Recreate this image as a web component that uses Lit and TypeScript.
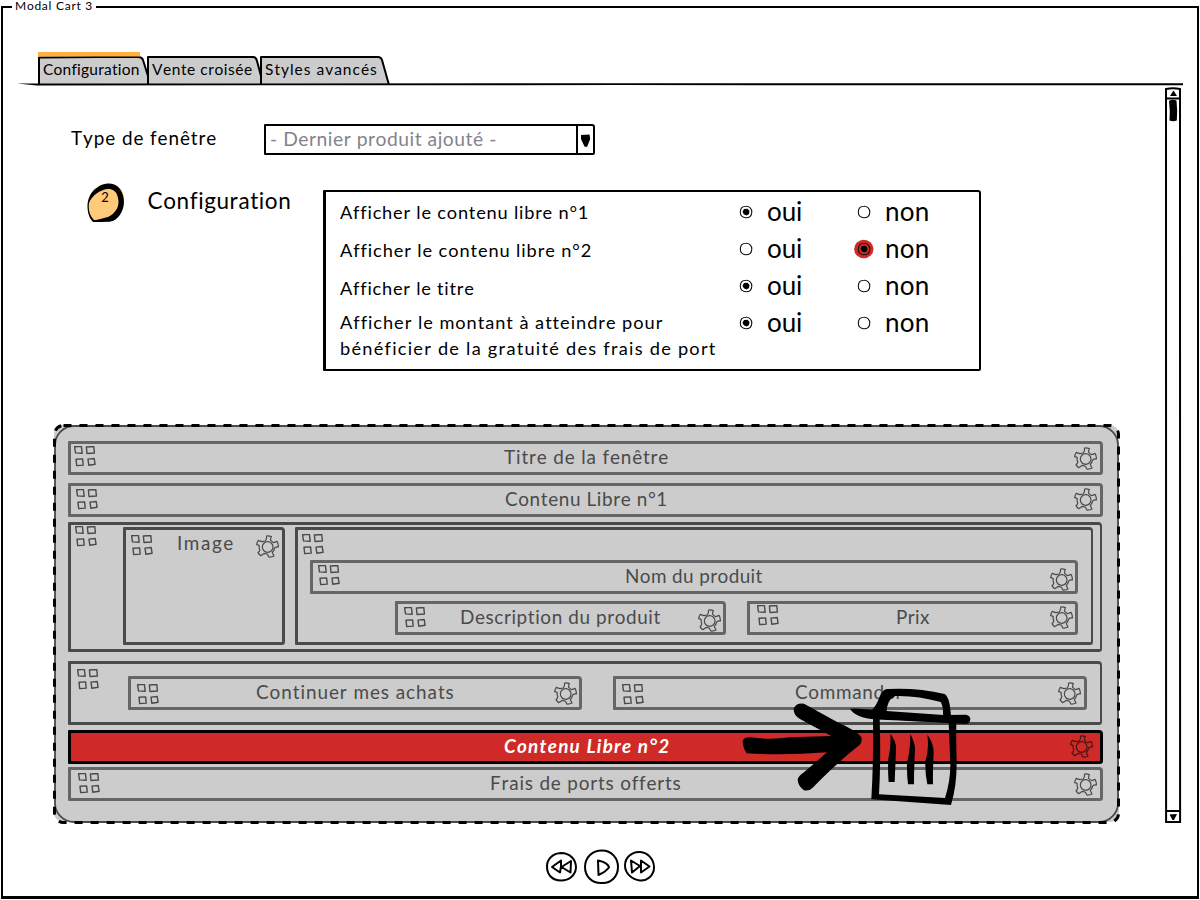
import { LitElement, html, svg, css, nothing } from "lit";
import { customElement, property, query } from "lit/decorators.js";

/** One line of text, tracked so that it fills a given width. */
@customElement("sk-text")
class SkText extends LitElement {
  @property() text = "";
  @property({ type: Number }) w = 0;
  @property({ type: Number }) size = 18.9;
  @query("span") span!: HTMLSpanElement;
  static styles = css`
    :host { display: block; flex: none; height: var(--line, 24px); }
    span { display: block; width: max-content; white-space: pre; line-height: var(--line, 24px); font-kerning: none; font-variant-ligatures: none; }
  `;
  firstUpdated() {
    const natural = this.span.getBoundingClientRect().width;
    const gaps = Math.max(1, this.text.length - 1);
    this.span.style.letterSpacing = (this.w + 0.3 - natural) / gaps + "px";
  }
  render() {
    return html`<span style="font-size:${this.size}px">${this.text}</span>`;
  }
}

const handle = html`<svg width="22" height="21" viewBox="0.2 0.5 22 21" fill="none" stroke="#4a4a4a" stroke-width="1.4" stroke-linejoin="round">
  <path d="M.8 1.2 7.6.9 8.4 7.8 1.7 7.4zM12.6 1.5 20 1 20.6 7.5 13.2 8zM2.2 13.8 8.8 13.4 9.4 19.6 2.9 20.1zM14.2 13.6 20.4 13 21.3 18.8 15 19.7z"/></svg>`;

const gear = html`<svg width="23" height="23" viewBox="0 0 69 69" fill="none" stroke="var(--gear, #4a4a4a)" stroke-width="3.6" stroke-linejoin="round">
  <path d="M32 3Q39 2 46 5Q43 11 44 16L52 23Q58 22 63 19Q68 27 67 36Q61 35 56 39Q54 47 49 52Q51 58 54 63Q47 67 38 66Q37 60 33 57L24 55Q19 60 14 62Q9 58 6 53Q12 49 11 43Q8 38 10 32Q6 29 2 29Q3 21 7 16Q12 19 18 20L28 18Q32 12 32 3Z"/>
  <circle cx="35" cy="36" r="16"/></svg>`;

@customElement("sk-bar")
class SkBar extends LitElement {
  @property() label = "";
  @property({ type: Number }) hx = -1;
  @property({ type: Number }) hy = 5;
  @property({ type: Number }) tx = 0;
  @property({ type: Number }) ty = 4;
  @property({ type: Number }) tw = 0;
  @property({ type: Number }) gx = 0;
  @property({ type: Number }) gy = 6.5;
  static styles = css`
    :host { display: flex; box-sizing: border-box; flex: none; height: 34px; border: 3px solid #666; border-radius: 1px 4px 3px 1px; align-items: flex-start; color: #4a4a4a; }
    :host([tall]) { border-color: #4a4a4a; }
    :host([danger]) { --gear: #4a1512; background: #cf2a27; border-color: #000; color: #fff; font-style: italic; font-weight: 700; }
    svg, sk-text { flex: none; display: block; }
    .cell { flex: none; }
  `;
  render() {
    const hasHandle = this.hx >= 0;
    const after = hasHandle ? this.hx + 22 : 3;
    return html`
      ${hasHandle ? html`<div class="cell" style="margin:${this.hy - 3}px 0 0 ${this.hx - 3}px">${handle}</div>` : nothing}
      <div class="cell" style="width:${this.tw}px;margin:${this.ty - 3}px 0 0 ${this.tx - after}px"><sk-text .text=${this.label} .w=${this.tw}></sk-text></div>
      <div class="cell" style="margin:${this.gy - 3.3}px 0 0 ${this.gx + 0.3 - this.tx - this.tw}px">${gear}</div>`;
  }
}

@customElement("sk-radio")
class SkRadio extends LitElement {
  @property({ type: Boolean }) on = false;
  @property({ type: Boolean }) alert = false;
  static styles = css`:host, svg { display: block; flex: none; }`;
  render() {
    return html`<svg width="20" height="20" viewBox="0 0 20 20">
      ${this.alert ? svg`<ellipse cx="9.8" cy="10" rx="9.7" ry="9.2" fill="#cf2a27"/>` : nothing}
      <path d="M10 4.3C13.4 4.2 15.8 6.6 15.8 10C15.7 13.5 13.3 15.8 10 15.8C6.6 15.7 4.2 13.4 4.3 10C4.4 6.6 6.7 4.3 10 4.3Z" fill="none" stroke="#111" stroke-width="1.1"/>
      ${this.on ? svg`<path d="M8 7.1 11.6 6.7 13.5 9 13 12 10.7 13.4 7.8 12.3 6.5 9.8Z" fill="#000"/>` : nothing}
    </svg>`;
  }
}

const options = [
  { lines: [["Afficher le contenu libre n°1", 248]], yes: true, h: 37, pad: 7 },
  { lines: [["Afficher le contenu libre n°2", 251]], yes: false, h: 37, pad: 8 },
  { lines: [["Afficher le titre", 133.5]], yes: true, h: 37, pad: 9 },
  { lines: [["Afficher le montant à atteindre pour", 322], ["bénéficier de la gratuité des frais de port", 375]], yes: true, h: 60, pad: 6 },
] as { lines: [string, number][]; yes: boolean; h: number; pad: number }[];

@customElement("app-root")
class AppRoot extends LitElement {
  static styles = css`
    :host { display: block; position: relative; width: 1200px; height: 900px; box-sizing: border-box; padding: 6px 1px 1px; background: #fff; color: #000; font-family: Lato, "Open Sans", sans-serif; }
    svg { display: block; flex: none; }
    .frame { box-sizing: border-box; height: 893px; border: 2px solid #000; border-bottom-width: 3px; display: flex; flex-direction: column; }
    .legend { position: absolute; left: 12px; top: 0; width: 81px; padding-left: 3px; background: #fff; --line: 12px; }
    .tabs { display: flex; height: 33px; margin: 44px 0 0 35px; flex: none; }
    .tab { display: grid; flex: none; }
    .tab > * { grid-area: 1 / 1; }
    .tab sk-text { margin: 5px 0 0 5px; }
    .rule { width: 1167px; height: 3px; margin: -2px 0 0 14px; flex: none; }
    .body { display: flex; flex: none; }
    .main { width: 1162px; flex: none; }
    .type { display: flex; margin: 38px 0 0 68px; }
    .type > sk-text { margin-top: 2px; width: 193px; }
    .select { display: flex; box-sizing: border-box; width: 331px; height: 31px; border: 2px solid #000; border-radius: 1px 3px 2px 1px; color: #85828c; }
    .select sk-text { width: 306px; margin: 1px 0 0 4px; }
    .arrow { border-left: 2px solid #000; height: 27px; }
    .config { display: flex; margin: 28px 0 0 84px; height: 188px; }
    .config > sk-text { margin: 6px 0 0 21.5px; width: 175.5px; }
    .options { box-sizing: border-box; margin: 7px 0 0; width: 658px; height: 181px; border: 2px solid #000; border-left-width: 3px; border-radius: 1px 3px 2px 1px; padding: 1px 0 0 14px; }
    .option { display: flex; }
    .question { flex: none; width: 396px; }
    .question sk-text + sk-text { margin-top: 2px; }
    .option sk-radio { margin-top: 9px; }
    .answer { flex: none; width: 87px; margin: 6px 0 0 11px; }
    .zone { position: relative; display: flex; flex-direction: column; box-sizing: border-box; width: 1067px; height: 400px; margin: 53px 0 0 50px; padding: 17px 0 0 15px; }
    .outline { position: absolute; left: 0; top: 0; }
    .zone > .row { position: relative; }
    .w { width: 1035px; }
    .group { position: relative; display: flex; box-sizing: border-box; flex: none; width: 1034px; border: 3px solid #4a4a4a; border-right-width: 2px; border-radius: 1px 4px 3px 1px; align-items: flex-start; }
    .g1 { height: 130px; margin: 5px 0 9px; }
    .g1 > svg { margin: 1px 0 0 4px; }
    .image { width: 162px; height: 118px; margin: 2px 0 0 26px; }
    .inner { display: flex; flex-direction: column; box-sizing: border-box; width: 798px; height: 118px; margin: 2px 0 0 10px; border: 3px solid #4a4a4a; border-right-width: 2px; border-radius: 1px 4px 3px 1px; }
    .inner > svg { margin: 4px 0 0 4px; }
    .name { width: 768px; margin: 5px 0 0 12px; }
    .pair { display: flex; margin: 7px 0 0 97px; gap: 21px; }
    .desc, .price { width: 331px; }
    .g2 { height: 64px; margin-bottom: 5px; }
    .g2 > svg { margin: 5px 0 0 6px; }
    .continue { width: 454px; margin: 12px 0 0 29px; }
    .order { width: 474px; margin: 12px 0 0 31px; }
    .trash { position: absolute; left: 740px; top: 684px; pointer-events: none; }
    .scroll { margin-top: 1px; }
    .player { display: flex; margin: 24px 0 0 542px; }
  `;

  tab(label: string, w: number, tw: number, path: string, active = false) {
    return html`<div class="tab" style="width:${w}px">
      <svg width=${w + 1} height="33" viewBox="0 0 ${w + 1} 33" overflow="hidden">
        <path d=${path} fill="#ccc" stroke="#000" stroke-width="2" stroke-linejoin="round"/>
        ${active ? svg`<path d="M0 0H102V4.5H0Z" fill="#ffb13d"/>` : nothing}
      </svg>
      <sk-text .text=${label} .w=${tw} .size=${15.5}></sk-text></div>`;
  }

  render() {
    return html`
    <div class="frame">
      <div class="legend"><sk-text text="Modal Cart 3" .w=${77} .size=${12}></sk-text></div>
      <div class="tabs">
        ${this.tab("Configuration", 109, 96, "M1 33V5.5L60 5H100Q104 5 105 8L110 24V33Z", true)}
        ${this.tab("Vente croisée", 113, 100, "M1 33V5H106Q109 5 110 9L114 24V33Z")}
        ${this.tab("Styles avancés", 130, 111.5, "M1 33V5L118 5Q121 5 122 8L129 33Z")}
      </div>
      <svg class="rule" viewBox="0 0 1167 3"><path d="M0 .6L22 .4L1166 .3V2.2L600 2.1L20 2.4Z"/></svg>
      <div class="body">
        <div class="main">
          <div class="type">
            <sk-text text="Type de fenêtre" .w=${145}></sk-text>
            <div class="select">
              <sk-text text="- Dernier produit ajouté -" .w=${226} .size=${19.3}></sk-text>
              <svg class="arrow" width="15" height="27" viewBox="0 0 15 27"><path d="M3 9L11.5 8.5L12.2 13L9 21L6.5 20.5L3 13Z"/></svg>
            </div>
          </div>
          <div class="config">
            <svg width="39" height="40" viewBox="0 0 39 40">
              <path d="M18 1C29 -1 38 6 37 18C37 29 30 38 22 39L7 39C2 35 0 29 1 20C2 10 8 3 18 1Z" fill="#ffca7a"/>
              <path fill-rule="evenodd" d="M11 4C17 -1 28 -1 33 6C40 16 37 30 29 36C26 39 21 39 6 39C0 33 0 22 1 18C3 11 6 7 11 4ZM23 6C15 5 5 12 2 20C1 28 3 33 7 37C12 37 15 35 21 34C29 30 33 23 31 15C30 9 27 7 23 6Z"/>
              <text x="14.3" y="19" font-size="13">2</text>
            </svg>
            <sk-text text="Configuration" .w=${143} .size=${22.5}></sk-text>
            <div class="options">
              ${options.map((o) => html`<div class="option" style="height:${o.h}px">
                <div class="question" style="margin-top:${o.pad}px">
                  ${o.lines.map(([t, w]) => html`<sk-text .text=${t} .w=${w} .size=${18.2}></sk-text>`)}
                </div>
                <sk-radio .on=${o.yes}></sk-radio>
                <div class="answer"><sk-text text="oui" .w=${35} .size=${26}></sk-text></div>
                <sk-radio .on=${!o.yes} .alert=${!o.yes}></sk-radio>
                <div class="answer"><sk-text text="non" .w=${44} .size=${26}></sk-text></div>
              </div>`)}
            </div>
          </div>
          <div class="zone">
            <svg class="outline" width="1067" height="400" viewBox="0 0 1067 400">
              <rect x="1" y="1" width="1065" height="397" rx="9" fill="#ccc"/>
              <rect x="2" y="2" width="1063" height="396" rx="19" fill="none" stroke="#4a4a4a" stroke-width="1.8"/>
              <rect x="1.5" y="1.5" width="1064" height="397" rx="9" fill="none" stroke="#000" stroke-width="3" stroke-dasharray="8 8"/>
            </svg>
            <sk-bar class="row w" label="Titre de la fenêtre" .hx=${6} .hy=${5} .tx=${436} .tw=${164} .ty=${4} .gx=${1005.5} .gy=${6.5}></sk-bar>
            <sk-bar class="row w" style="margin-top:8px" label="Contenu Libre n°1" .hx=${8} .hy=${5.5} .tx=${437} .tw=${162} .ty=${4} .gx=${1005.5} .gy=${5.5}></sk-bar>
            <div class="group g1">
              ${handle}
              <sk-bar tall class="image" label="Image" .hx=${7.5} .hy=${7.5} .tx=${54} .tw=${56} .ty=${4} .gx=${132.5} .gy=${8}></sk-bar>
              <div class="inner">
                ${handle}
                <sk-bar class="name" label="Nom du produit" .hx=${8} .hy=${4.5} .tx=${315} .tw=${137} .ty=${4} .gx=${739.5} .gy=${8}></sk-bar>
                <div class="pair">
                  <sk-bar class="desc" label="Description du produit" .hx=${9} .hy=${5.5} .tx=${65} .tw=${200} .ty=${4} .gx=${302.5} .gy=${8}></sk-bar>
                  <sk-bar class="price" label="Prix" .hx=${10} .hy=${4} .tx=${149} .tw=${33} .ty=${4} .gx=${302.5} .gy=${5.5}></sk-bar>
                </div>
              </div>
            </div>
            <div class="group g2">
              ${handle}
              <sk-bar class="continue" label="Continuer mes achats" .hx=${9} .hy=${7.5} .tx=${128} .tw=${197.5} .ty=${4} .gx=${425.5} .gy=${6.5}></sk-bar>
              <sk-bar class="order" label="Commander" .hx=${9} .hy=${7.5} .tx=${182} .tw=${107} .ty=${4} .gx=${444.5} .gy=${6.5}></sk-bar>
            </div>
            <sk-bar danger class="row w" label="Contenu Libre n°2" .tx=${436} .tw=${165} .ty=${4} .gx=${1001.5} .gy=${5.5}></sk-bar>
            <sk-bar class="row w" style="margin-top:3px" label="Frais de ports offerts" .hx=${10} .hy=${6} .tx=${422} .tw=${190.5} .ty=${4} .gx=${1005.5} .gy=${6.5}></sk-bar>
          </div>
        </div>
        <svg class="scroll" width="17" height="738" viewBox="0 0 17 738">
          <path d="M1 2Q8 .5 15 2L15.1 735H1.1Z" fill="#fff" stroke="#000" stroke-width="2"/>
          <path d="M1 11.5H15M1 724H15" stroke="#000" stroke-width="2"/>
          <path d="M8.5 3.5L12 9H5ZM4.5 727.5L12 727L9 733H7.5ZM4 14Q7 12 11.5 13.5L12.2 24L11.8 33.5Q8 35 4.5 33.5L4.8 24Z"/>
        </svg>
      </div>
      <svg class="player" width="112" height="38" viewBox="0 0.5 112 38" fill="none" stroke="#000" stroke-width="2" stroke-linejoin="round">
        <path d="M16 4.5C25 4.5 31 11 31 19C30.5 27 24 32 16 32C7 32 2 26 2 18C2 10 8 5 16 4.5Z"/>
        <path d="M57 2C67 2 73 10 73 18.5C73 28 66 35 57 34.5C47 35 40 28 40 18.5C40 9 47 2 57 2Z"/>
        <path d="M95 3.5C103 4 109 11 109 19C109 27 102 32.5 95 32C87 31 80 25 80 17C80 9 87 3 95 3.5Z"/>
        <path d="M16 12L7 18.5L15 24L16 18ZM26 12.5L16.5 18.5L25.5 24Z"/>
        <path d="M53 12Q63 14 64 19Q60 24 53.5 26.5Z"/>
        <path d="M86 12L95 17.5L87 24ZM96 12L104.5 18L96 24Z"/>
      </svg>
    </div>
    <svg class="trash" width="234" height="126" viewBox="30 102 702 378">
      <path d="M38 272Q43 262 60 262Q120 270 180 262L304 258L210 207Q190 196 191 176Q198 158 222 161L320 215Q385 245 394 262Q398 275 388 286Q330 330 248 413Q238 424 222 421Q203 408 203 388Q206 377 222 367L291 307Q160 317 50 310Q38 292 38 272Z"/>
      <path d="M424 182Q438 170 448 142Q458 117 472 117Q560 112 644 132Q660 142 663 200L639 194Q640 168 632 156Q560 136 496 138Q470 150 470 186Z"/>
      <path d="M360 176Q375 173 470 183L640 195L708 194Q722 198 721 208Q720 220 708 222Q600 216 432 208Q375 202 360 176Z"/>
      <path fill-rule="evenodd" d="M429 200L656 212L679 218Q678 260 680 340Q680 410 663 465L424 448Q431 330 429 200ZM449 207Q453 330 447 433L645 444Q662 390 661 340L656 218Z"/>
      <path d="M481 251Q500 275 498 300Q496 350 494 396H476Q473 360 475 325Q483 295 481 251ZM541 252Q556 280 555 300Q552 350 552 403H534Q530 370 531 340Q541 300 541 252ZM592 254Q612 280 611 310Q608 360 609 403H592Q585 370 586 335Q598 300 592 254Z"/>
    </svg>`;
  }
}
